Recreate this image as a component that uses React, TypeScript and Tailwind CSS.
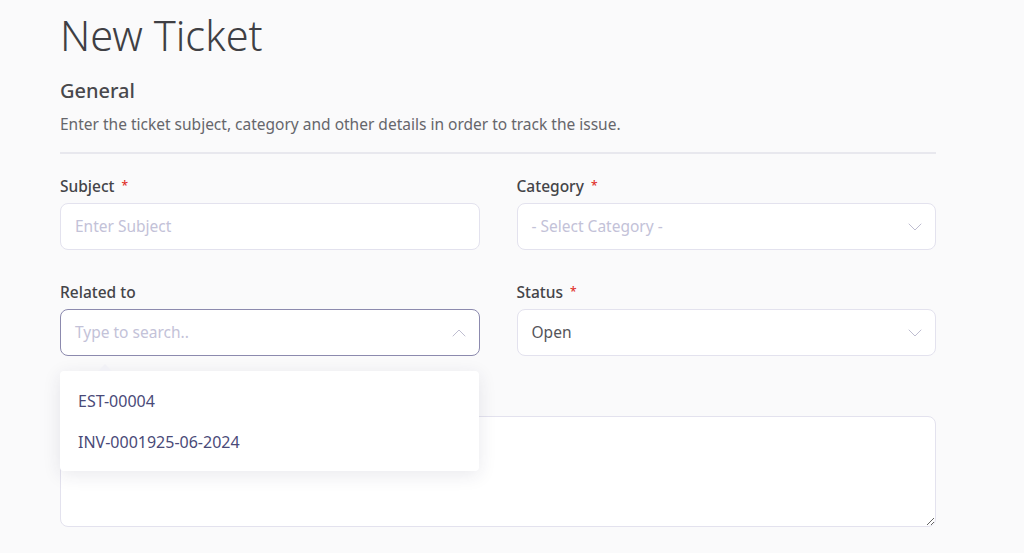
import { ChevronDown, ChevronUp } from 'lucide-react'

const font = { fontFamily: '"Noto Sans", "Open Sans", sans-serif' }

function Label({ text, required }: { text: string; required?: boolean }) {
  return (
    <label className="mb-[7px] block text-[15.5px] font-medium leading-5 text-[#444448]">
      {text}
      {required && <span className="ml-[7px] text-[12px] align-top text-[#e0302a]">*</span>}
    </label>
  )
}

function SelectBox({ value, placeholder }: { value?: string; placeholder?: string }) {
  return (
    <div className="flex h-[47px] items-center justify-between rounded-lg border border-[#e3e2ee] bg-white pl-[14px] pr-[8px]">
      <span className={`text-[15.5px] ${value ? 'text-[#55555a]' : 'text-[#c3c2d8]'}`}>{value ?? placeholder}</span>
      <ChevronDown size={24} strokeWidth={0.9} className="text-[#b8b7cc]" />
    </div>
  )
}

export default function App() {
  return (
    <div style={font} className="min-h-[553px] w-full overflow-hidden bg-[#fafafb] pl-[60px] pr-[88px]">
      <h1 className="pt-[9px] text-[41.5px] font-light leading-[52px] text-[#3f3f44]">New Ticket</h1>

      <h2 className="mt-[18px] text-[20px] font-medium leading-6 text-[#48484c]">General</h2>
      <p className="mt-[11px] text-[15.5px] leading-5 text-[#66666b]">
        Enter the ticket subject, category and other details in order to track the issue.
      </p>
      <div className="mt-[18px] h-[2px] bg-[#e8e8ee]" />

      <div className="mt-[22px] grid grid-cols-2 gap-x-[37px] gap-y-[32px]">
        <div>
          <Label text="Subject" required />
          <div className="flex h-[47px] items-center rounded-lg border border-[#e3e2ee] bg-white px-[14px]">
            <span className="text-[15.5px] text-[#c3c2d8]">Enter Subject</span>
          </div>
        </div>
        <div>
          <Label text="Category" required />
          <SelectBox placeholder="- Select Category -" />
        </div>

        <div className="relative">
          <Label text="Related to" />
          <div className="flex h-[47px] items-center justify-between rounded-lg border border-[#8c8aae] bg-white pl-[14px] pr-[8px]">
            <span className="text-[15.5px] text-[#c3c2d8]">Type to search..</span>
            <ChevronUp size={24} strokeWidth={0.9} className="text-[#b8b7cc]" />
          </div>
          <div className="absolute left-0 right-[1px] top-[89px] z-10 rounded-[4px] bg-white py-[9px] shadow-[0_4px_18px_rgba(40,40,80,0.1)]">
            <div className="absolute -top-[7px] left-[38px] h-0 w-0 border-x-[7px] border-b-[7px] border-x-transparent border-b-[#f1f1f6]" />
            <div className="flex h-[41px] items-center px-[18px] text-[16px] text-[#4a4a78]">EST-00004</div>
            <div className="flex h-[41px] items-center px-[18px] text-[16px] text-[#4a4a78]">INV-0001925-06-2024</div>
          </div>
        </div>
        <div>
          <Label text="Status" required />
          <SelectBox value="Open" />
        </div>

        <div className="col-span-2 mt-[1px]">
          <div className="mb-[7px] h-5" />
          <textarea className="block h-[111px] w-full rounded-lg border border-[#e3e2ee] bg-white" />
        </div>
      </div>
    </div>
  )
}
